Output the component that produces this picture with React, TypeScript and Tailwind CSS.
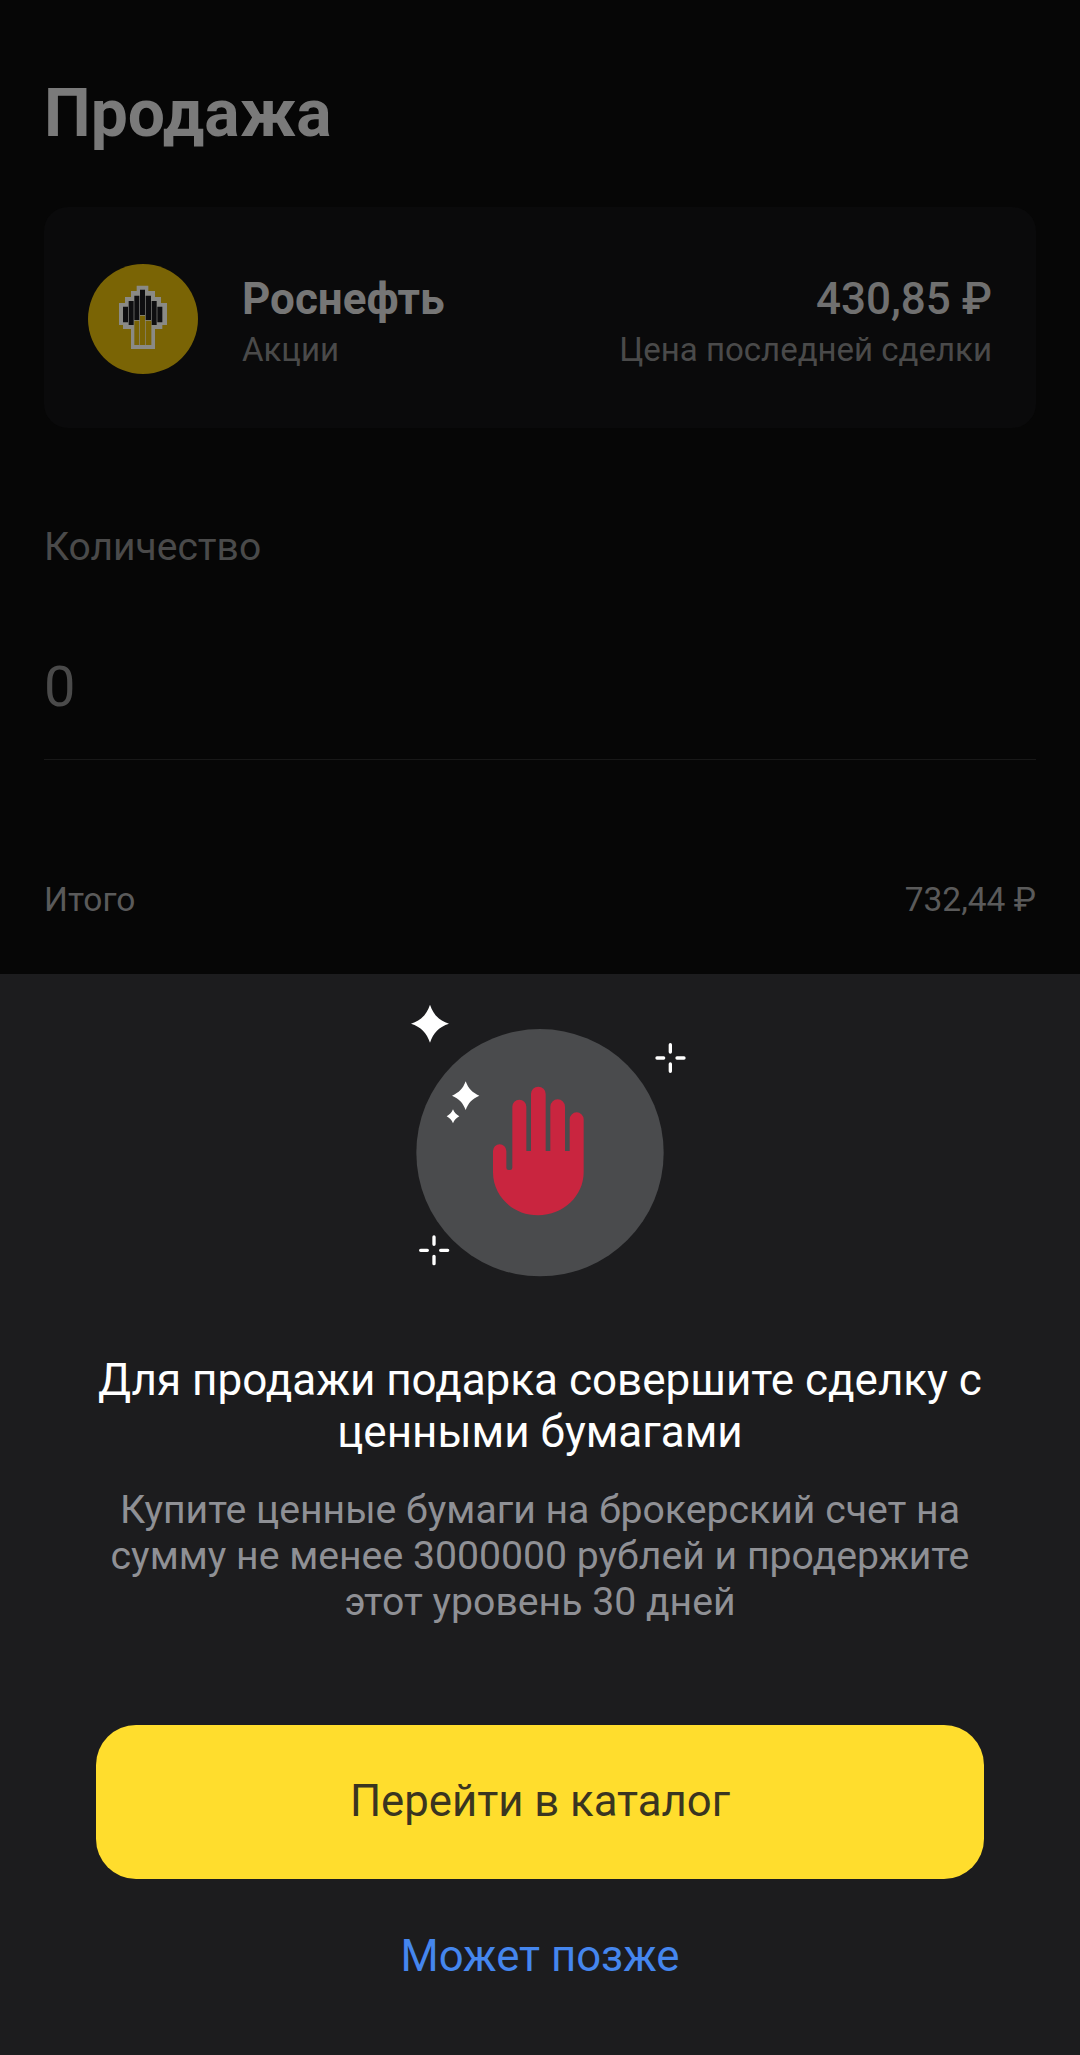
const font = { fontFamily: 'Roboto, sans-serif' };

function RosneftLogo() {
  return (
    <svg viewBox="0 0 228 228" className="w-[76px] h-[76px] mb-[12px]">
      <path
        fill="#8a8a86"
        d="M95 32h35v16h20v18h18v18h18v66h-14v12h-22v60H78v-60H54v-12H42V84h18V66h18V48h17z"
      />
      <path
        fill="#0e0e10"
        d="M54 95h15v47H54zM71 78h15v72H71zM88 62h15v73H88zM105 44h15v76h-15zM122 62h16v73h-16zM140 78h15v72h-15zM157 95h15v47h-15z"
      />
      <path fill="#7a6405" d="M88 137h15v73H88zM105 122h15v88h-15zM122 137h17v73h-17z" />
    </svg>
  );
}

function StopIllustration() {
  return (
    <svg viewBox="0 0 960 960" className="w-[320px] h-[320px]">
      <circle cx="450" cy="518" r="371" fill="#4a4b4d" />
      <path
        fill="#c9253f"
        d="M423 342a22 22 0 0 1 44 0v171h14V380a22 22 0 0 1 44 0v133h14V418a21 21 0 0 1 42 0v159c0 70-60 129-137 129s-135-59-135-129v-64a20 20 0 0 1 40 0v50a7 7 0 0 0 7 7h4a7 7 0 0 0 7-7V380a21 21 0 0 1 42 0v133h14z"
      />
      <path fill="#fff" d="M120 74c10 30 27 47 57 57-30 10-47 27-57 57-10-30-27-47-57-57 30-10 47-27 57-57z" />
      <path fill="#fff" d="M227 304c8 22 20 34 41 43-21 9-33 21-41 43-8-22-20-34-41-43 21-9 33-21 41-43z" />
      <path fill="#fff" d="M189 388c4 10 9 15 19 21-10 6-15 11-19 21-4-10-9-15-19-21 10-6 15-11 19-21z" />
      <g stroke="#fff" strokeWidth="10" strokeLinecap="round">
        <path d="M841 194v22M841 252v22M801 234h20M861 234h21" />
        <path d="M132 771v22M132 829v22M92 811h20M152 811h21" />
      </g>
    </svg>
  );
}

export default function App() {
  return (
    <div className="w-[1080px] h-[2055px] flex flex-col bg-[#060606] overflow-hidden" style={font}>
      {/* dimmed screen behind the sheet */}
      <div className="h-[974px] px-[44px] pt-[77px]">
        <h1 className="text-[66px] leading-[74px] font-bold text-[#7a7a7a]">Продажа</h1>

        <div className="mt-[56px] h-[221px] rounded-[24px] bg-[#0a0a0b] pl-[44px] pr-[44px] flex items-center">
          <div className="mt-[2px] w-[110px] h-[110px] rounded-full bg-[#7a6405] flex items-center justify-center shrink-0">
            <RosneftLogo />
          </div>
          <div className="ml-[44px] pt-[10px]">
            <div className="text-[44px] leading-[50px] font-bold text-[#767676]">Роснефть</div>
            <div className="mt-[5px] text-[33px] leading-[42px] text-[#4a4a4a]">Акции</div>
          </div>
          <div className="ml-auto pt-[10px] text-right">
            <div className="text-[44px] leading-[50px] font-medium text-[#707070]">430,85 ₽</div>
            <div className="mt-[5px] text-[33px] leading-[42px] text-[#4a4a4a]">Цена последней сделки</div>
          </div>
        </div>

        <div className="mt-[97px] text-[39px] leading-[44px] text-[#4a4a4a]">Количество</div>
        <div className="mt-[86px] text-[56px] leading-[64px] text-[#4a4a4a]">0</div>
        <div className="mt-[40px] h-[1px] bg-[#181818]" />
        <div className="mt-[120px] flex justify-between text-[33.5px] leading-[40px] text-[#5a5a5a]">
          <span>Итого</span>
          <span>732,44 ₽</span>
        </div>
      </div>

      {/* bottom sheet */}
      <div className="flex-1 bg-[#1c1c1e] flex flex-col items-center">
        <div className="mt-[6px] ml-[20px]">
          <StopIllustration />
        </div>
        <h2 className="mt-[54px] w-[920px] text-center text-[44px] leading-[52px] text-white">
          Для продажи подарка совершите сделку с ценными бумагами
        </h2>
        <p className="mt-[29px] w-[880px] text-center text-[39.2px] leading-[46px] text-[#8f9095]">
          Купите ценные бумаги на брокерский счет на сумму не менее 3000000 рублей и продержите этот уровень 30 дней
        </p>
        <div className="mt-[100px] w-[888px] h-[154px] rounded-[40px] bg-[#ffdd2d] flex items-center justify-center text-[43.7px] text-[#3a3520]">
          Перейти в каталог
        </div>
        <div className="mt-[52px] text-[43.7px] leading-[50px] text-[#4586ee]">Может позже</div>
      </div>
    </div>
  );
}
